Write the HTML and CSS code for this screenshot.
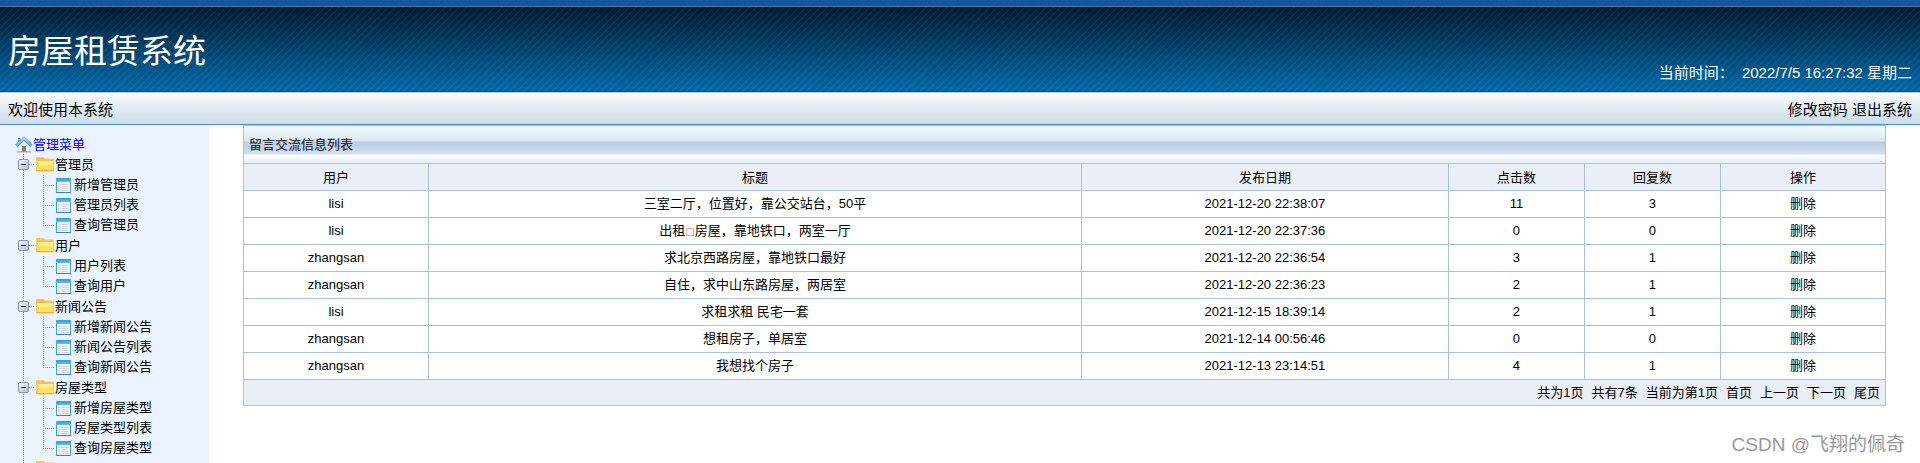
FILE: index.html
```html
<!DOCTYPE html>
<html lang="zh-CN">
<head>
<meta charset="utf-8">
<title>房屋租赁系统</title>
<link rel="stylesheet" href="styles.css">
</head>
<body>
<svg class="defs" aria-hidden="true">
  <defs>
    <linearGradient id="gFolder" x1="0" y1="0" x2="0" y2="1"><stop offset="0" stop-color="#fff3a6"/><stop offset=".5" stop-color="#fee766"/><stop offset=".55" stop-color="#fddc3c"/><stop offset="1" stop-color="#fde878"/></linearGradient>
    <linearGradient id="gHead" x1="0" y1="0" x2="0" y2="1"><stop offset="0" stop-color="#2f9bdc"/><stop offset="1" stop-color="#5cc0ee"/></linearGradient>
    <linearGradient id="gToggle" x1="0" y1="0" x2="1" y2="1"><stop offset="0" stop-color="#fff"/><stop offset="1" stop-color="#a9bbd2"/></linearGradient>
    <linearGradient id="gRoof" x1="0" y1="0" x2="0" y2="1"><stop offset="0" stop-color="#9cdcf6"/><stop offset="1" stop-color="#56b4e0"/></linearGradient>
  </defs>
  <symbol id="folder" viewBox="0 0 18 15">
    <path d="M.5.500h7l1.500 1.500h8.500v12H.5z" fill="#f9bd52" stroke="#fbc76f"/>
    <path d="M1.500 4h15.500v9H1.500z" fill="url(#gFolder)"/>
    <path d="M.5 13.500h17" stroke="#f7a93b"/>
  </symbol>
  <symbol id="sheet" viewBox="0 0 15 15">
    <rect x=".5" y=".5" width="14" height="14" rx="1" fill="#f3f4f5" stroke="#3fa3d8"/>
    <rect x="0" y="0" width="15" height="4" rx="1" fill="url(#gHead)"/>
    <path d="M2 4.500h11" stroke="#fff"/>
    <path d="M2.500 6.500h2M5.500 6.500h7M2.500 8.500h2M5.500 8.500h7M2.500 10.500h2M5.500 10.500h7M2.500 12.500h2M5.500 12.500h7" stroke="#d3d5d8"/>
    <path d="M0 14.500h15" stroke="#2b8ac6"/>
  </symbol>
  <symbol id="toggle" viewBox="0 0 11 11">
    <rect x=".5" y=".5" width="10" height="10" rx="1.500" fill="url(#gToggle)" stroke="#8496b5"/>
    <path d="M3 5.500h5" stroke="#1c2a48"/>
  </symbol>
  <symbol id="home" viewBox="0 0 18 17">
    <path d="M3 9L9 3.500 15 9v6.500H3z" fill="#f4f4f2" stroke="#c3c2bf" stroke-width=".8"/>
    <path d="M2 16h14" stroke="#aaa79f"/>
    <path d="M7 10h4v5.500H7z" fill="#7b7d80"/>
    <path d="M3 2h2.500v4L3 8z" fill="#8a8f96"/>
    <path d="M1.500 9.800L9 2.500l7.500 7.300" fill="none" stroke="#4a9fcb" stroke-width="3.400"/>
    <path d="M1.600 9.300L9 2.200l7.400 7.100" fill="none" stroke="url(#gRoof)" stroke-width="2.200"/>
  </symbol>
</svg>

<header class="banner">
  <h1 class="banner-title">房屋租赁系统</h1>
  <p class="clock"><span>当前时间：</span><time>2022/7/5 16:27:32 星期二</time></p>
</header>

<div class="welcome">
  <span>欢迎使用本系统</span>
  <nav class="account"><a href="#">修改密码</a> <a href="#">退出系统</a></nav>
</div>

<div class="workspace">
  <nav class="sidebar">
    <a class="root" href="#"><svg class="ico-home"><use href="#home"/></svg>管理菜单</a>
    <ul class="tree">
      <li>
        <div class="group"><button type="button" aria-label="折叠"><svg><use href="#toggle"/></svg></button><svg class="ico-folder"><use href="#folder"/></svg><a href="#">管理员</a></div>
        <ul class="leaves">
          <li><svg><use href="#sheet"/></svg><a href="#">新增管理员</a></li>
          <li><svg><use href="#sheet"/></svg><a href="#">管理员列表</a></li>
          <li><svg><use href="#sheet"/></svg><a href="#">查询管理员</a></li>
        </ul>
      </li>
      <li>
        <div class="group"><button type="button" aria-label="折叠"><svg><use href="#toggle"/></svg></button><svg class="ico-folder"><use href="#folder"/></svg><a href="#">用户</a></div>
        <ul class="leaves">
          <li><svg><use href="#sheet"/></svg><a href="#">用户列表</a></li>
          <li><svg><use href="#sheet"/></svg><a href="#">查询用户</a></li>
        </ul>
      </li>
      <li>
        <div class="group"><button type="button" aria-label="折叠"><svg><use href="#toggle"/></svg></button><svg class="ico-folder"><use href="#folder"/></svg><a href="#">新闻公告</a></div>
        <ul class="leaves">
          <li><svg><use href="#sheet"/></svg><a href="#">新增新闻公告</a></li>
          <li><svg><use href="#sheet"/></svg><a href="#">新闻公告列表</a></li>
          <li><svg><use href="#sheet"/></svg><a href="#">查询新闻公告</a></li>
        </ul>
      </li>
      <li>
        <div class="group"><button type="button" aria-label="折叠"><svg><use href="#toggle"/></svg></button><svg class="ico-folder"><use href="#folder"/></svg><a href="#">房屋类型</a></div>
        <ul class="leaves">
          <li><svg><use href="#sheet"/></svg><a href="#">新增房屋类型</a></li>
          <li><svg><use href="#sheet"/></svg><a href="#">房屋类型列表</a></li>
          <li><svg><use href="#sheet"/></svg><a href="#">查询房屋类型</a></li>
        </ul>
      </li>
      <li>
        <div class="group"><button type="button" aria-label="折叠"><svg><use href="#toggle"/></svg></button><svg class="ico-folder"><use href="#folder"/></svg></div>
      </li>
    </ul>
  </nav>

  <main class="content">
    <table class="messages">
      <colgroup><col class="c-user"><col class="c-title"><col class="c-date"><col class="c-num"><col class="c-num"><col class="c-action"></colgroup>
      <thead>
        <tr class="heading"><th colspan="6">留言交流信息列表</th></tr>
        <tr class="columns"><th>用户</th><th>标题</th><th>发布日期</th><th>点击数</th><th>回复数</th><th>操作</th></tr>
      </thead>
      <tbody>
        <tr><td>lisi</td><td>三室二厅，位置好，靠公交站台，50平</td><td>2021-12-20 22:38:07</td><td>11</td><td>3</td><td><a href="#">删除</a></td></tr>
        <tr><td>lisi</td><td>出租<span class="missing">□</span>房屋，靠地铁口，两室一厅</td><td>2021-12-20 22:37:36</td><td>0</td><td>0</td><td><a href="#">删除</a></td></tr>
        <tr><td>zhangsan</td><td>求北京西路房屋，靠地铁口最好</td><td>2021-12-20 22:36:54</td><td>3</td><td>1</td><td><a href="#">删除</a></td></tr>
        <tr><td>zhangsan</td><td>自住，求中山东路房屋，两居室</td><td>2021-12-20 22:36:23</td><td>2</td><td>1</td><td><a href="#">删除</a></td></tr>
        <tr><td>lisi</td><td>求租求租 民宅一套</td><td>2021-12-15 18:39:14</td><td>2</td><td>1</td><td><a href="#">删除</a></td></tr>
        <tr><td>zhangsan</td><td>想租房子，单居室</td><td>2021-12-14 00:56:46</td><td>0</td><td>0</td><td><a href="#">删除</a></td></tr>
        <tr><td>zhangsan</td><td>我想找个房子</td><td>2021-12-13 23:14:51</td><td>4</td><td>1</td><td><a href="#">删除</a></td></tr>
      </tbody>
      <tfoot>
        <tr><td colspan="6"><div class="pager"><span>共为1页</span><span>共有7条</span><span>当前为第1页</span><a href="#">首页</a><a href="#">上一页</a><a href="#">下一页</a><a href="#">尾页</a></div></td></tr>
      </tfoot>
    </table>
  </main>
</div>
<div class="watermark">CSDN @飞翔的佩奇</div>
</body>
</html>
```
FILE: styles.css
```css
* { box-sizing: border-box; }
body {
  margin: 0;
  height: 100vh;
  overflow: hidden;
  display: flex;
  flex-direction: column;
  background: #fff;
  color: #000;
  font: 13px/20px "Liberation Sans", "Noto Sans CJK SC", sans-serif;
}
a { color: inherit; text-decoration: none; }
ul { list-style: none; margin: 0; padding: 0; }
svg { display: block; flex: none; }
.defs { position: absolute; width: 0; height: 0; }

.banner {
  display: flex;
  justify-content: space-between;
  align-items: flex-end;
  flex: none;
  height: 92px;
  padding: 0 8px 7px;
  border-top: 6px solid #17559c;
  border-bottom: 1px solid #0d4a80;
  box-shadow: inset 0 1px #3f78b8;
  background:
    repeating-linear-gradient(135deg, rgba(255, 255, 255, .05) 0 1px, transparent 2px 5px),
    linear-gradient(#001a2e, #0068a8);
  color: #fff;
}
.banner-title { margin: 0; padding-bottom: 10px; font-size: 33px; line-height: 44px; font-weight: 400; }
.clock { display: flex; gap: 8px; margin: 0; font-size: 15px; line-height: 22px; }

.welcome {
  display: flex;
  justify-content: space-between;
  flex: none;
  padding: 6px 8px 4px;
  border-top: 1px solid #c4d4e2;
  border-bottom: 1px solid #4a8fd6;
  background: linear-gradient(#f9fbfc, #cddde9);
  font-size: 15px;
  line-height: 21px;
}

.workspace { display: flex; flex: 1; min-height: 0; }
.sidebar { flex: none; width: 209px; padding: 10px 0 0 15px; background: #eaf3ff; overflow: hidden; }
.root { display: flex; align-items: center; line-height: 19px; color: #00f; }
.ico-home { width: 18px; height: 17px; }
.tree {
  padding-left: 3px;
  background: repeating-linear-gradient(#8f959e 0 1px, transparent 1px 2px) 8px 0 / 1px 100% no-repeat;
}
.group {
  display: flex;
  align-items: center;
  height: 21px;
  background: repeating-linear-gradient(90deg, #8f959e 0 1px, transparent 1px 2px) 11px 50% / 6px 1px no-repeat;
}
.group button { margin: 0; padding: 0; border: 0; background: none; }
.group button svg { width: 11px; height: 11px; }
.ico-folder { width: 18px; height: 15px; margin: 0 1px 0 7px; }
.leaves { padding-left: 25px; }
.leaves li {
  display: flex;
  align-items: center;
  gap: 3px;
  height: 20px;
  padding-left: 13px;
  background:
    repeating-linear-gradient(#8f959e 0 1px, transparent 1px 2px) 0 0 / 1px 100% no-repeat,
    repeating-linear-gradient(90deg, #8f959e 0 1px, transparent 1px 2px) 0 50% / 12px 1px no-repeat;
}
.leaves li:last-child { background-size: 1px 50%, 12px 1px; }
.leaves svg { width: 15px; height: 15px; }

.content { flex: 1; min-width: 0; padding: 0 34px; }
.messages { width: 100%; table-layout: fixed; border-collapse: collapse; }
.messages th, .messages td { height: 27px; padding: 0; border: 1px solid #a9c1e0; text-align: center; font-weight: 400; }
.messages .columns th { padding-top: 1px; }
.c-user { width: 185px; }
.c-date { width: 367px; }
.c-num { width: 136px; }
.c-action { width: 165px; }
.messages .heading th {
  height: 38px;
  padding: 1px 0 0 5px;
  text-align: left;
  font-weight: 500;
  color: #333;
  background: linear-gradient(#f3f8fc 0, #dae7f0 40%, #b9cde5 42%, #d3e0ee 76%, #fff 77%, #e4edf6 100%);
}
.messages .columns th, .messages tfoot td { background: #e9eef7; }
.messages tfoot td { height: 26px; padding-right: 5px; }
.pager { display: flex; justify-content: flex-end; gap: 8px; }
.missing { color: #c66; font-family: "DejaVu Sans", sans-serif; font-size: 10px; line-height: 10px; }

.watermark {
  position: absolute;
  right: 15px;
  bottom: 5px;
  color: #999;
  font-size: 19px;
  line-height: 26px;
}
```
